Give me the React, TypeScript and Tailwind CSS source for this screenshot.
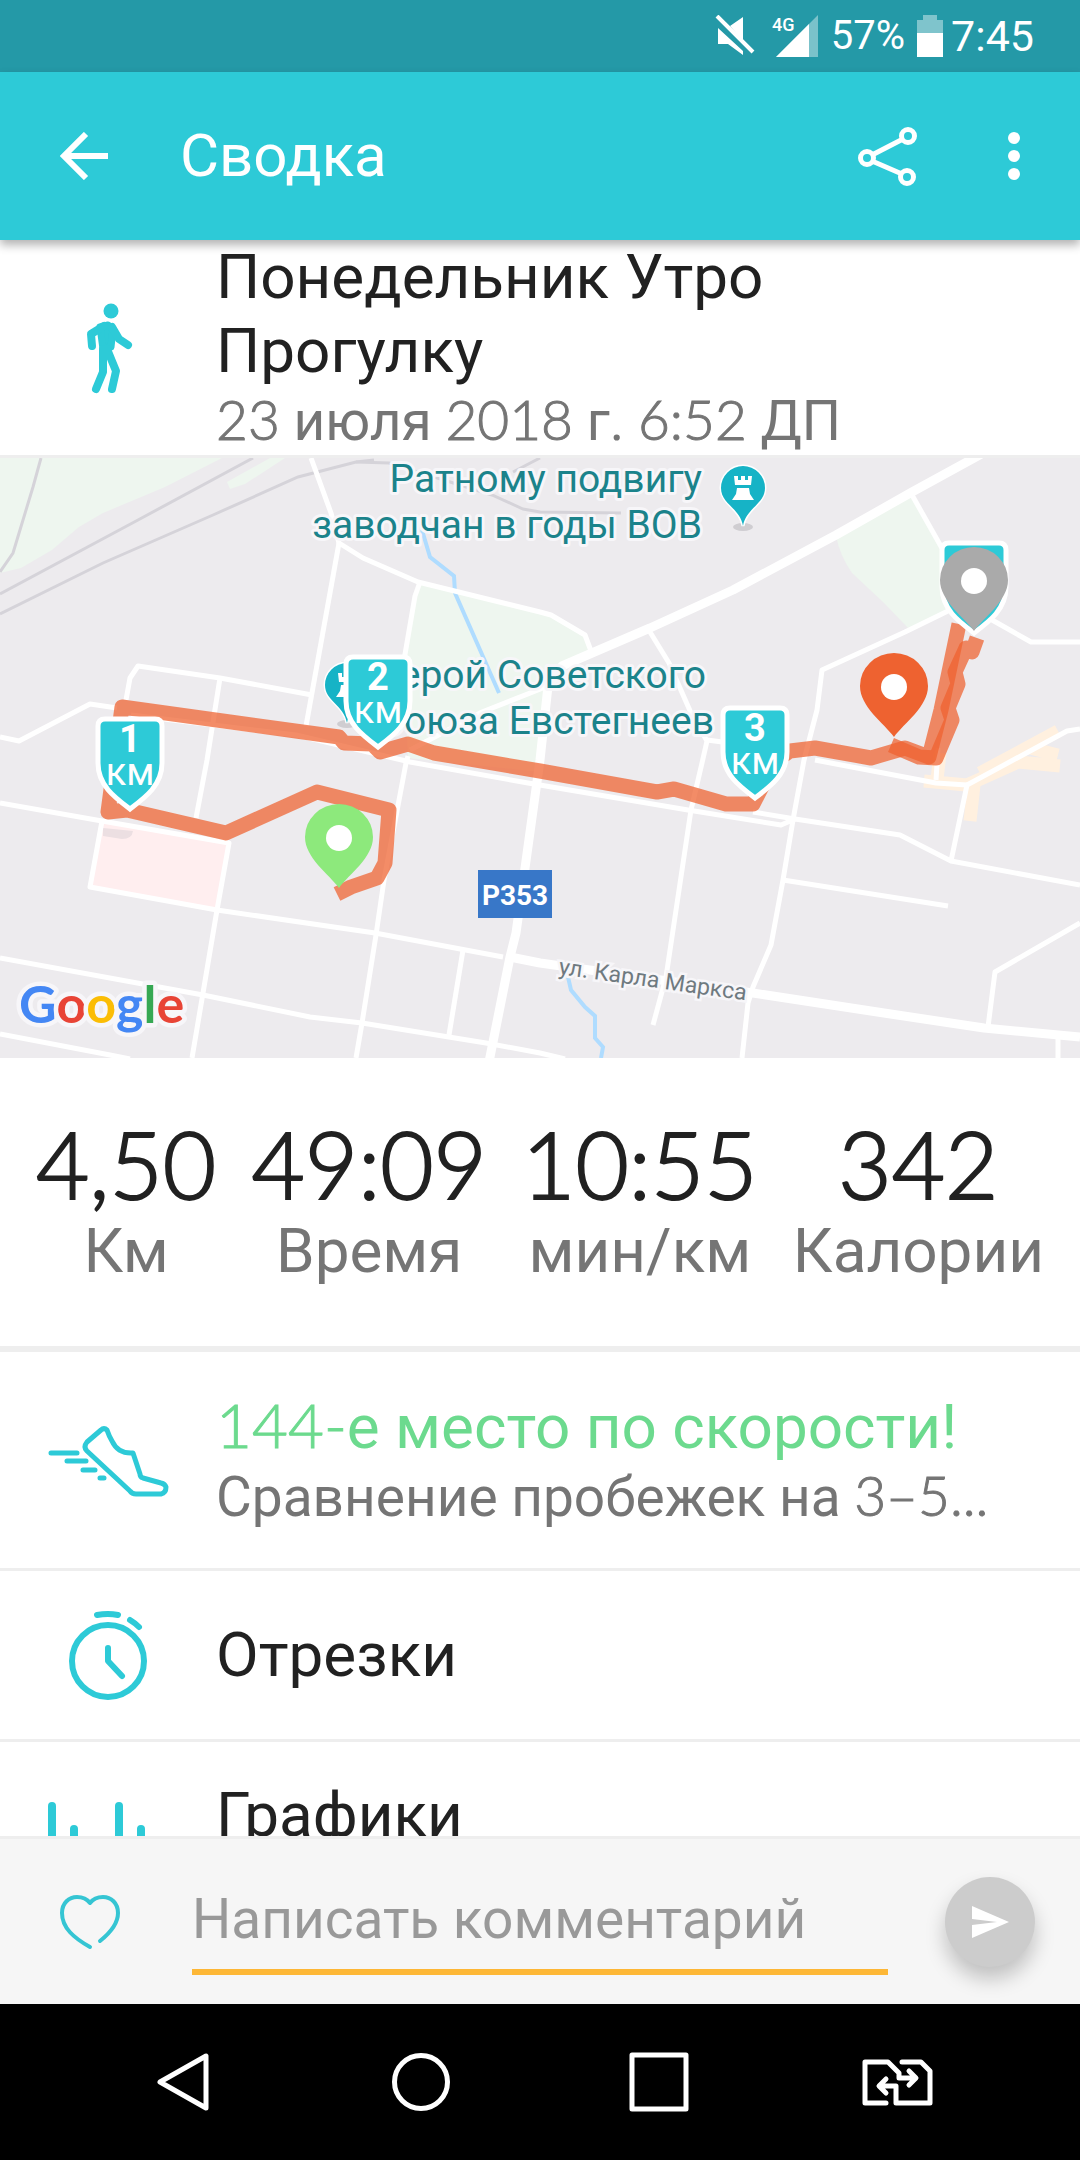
import { ReactNode } from "react";

const stats = [
	{ value: "4,50", label: "Км" },
	{ value: "49:09", label: "Время" },
	{ value: "10:55", label: "мин/км" },
	{ value: "342", label: "Калории" },
];

const minorRoads = [
	"M311 0L331 55L339 85L363 100L418 124L540 154L551 157L585 177L591 193",
	"M339 85L306 268",
	"M420 124L415 138L403 208",
	"M548 228L482 254L410 292",
	"M650 174L669 205L691 255L707 283L702 305L691 352L666 519L653 567",
	"M707 282L730 285",
	"M912 37L943 92V120",
	"M950 152L905 174L822 212L817 252L804 302L793 362L783 422L771 487L753 529L748 545L742 600",
	"M985 158L1031 184H1080",
	"M1080 271L1067 273L967 327L951 403",
	"M815 302L936 325L967 327",
	"M938 290L936 322",
	"M131 257L296 277L410 304L528 325L688 352L781 367L795 361",
	"M753 354L795 361L900 377L951 403L1080 427",
	"M783 422L948 448",
	"M1080 465L995 514L988 569",
	"M1058 580V600",
	"M0 345L102 363L229 385L217 452L203 535L192 600",
	"M102 363L90 429L217 452L375 475L503 499",
	"M0 500L203 537L310 559L362 565L486 585L540 595L565 601",
	"M0 576L110 597L130 601",
	"M220 220L207 302L196 360",
	"M408 298L406 305L384 422L376 477L362 565L356 600",
	"M463 492L449 577",
	"M126 242L130 220L138 208L220 220L312 237",
	"M0 279L19 283L90 246L117 250",
];

const mainRoads = [
	"M985 -6L912 34L836 77L733 132L650 170L592 195L562 208L548 228L540 302L516 475L510 499L489 604",
	"M510 499L540 505L753 535L884 555L984 570L1080 579",
];

const railways = [
	"M41 0L33 29L13 95L0 114",
	"M253 0L138 62L0 136",
	"M374 2L356 4L298 19L213 57L103 105L0 156",
	"M356 4L389 5L492 37L523 51L540 54L621 55",
	"M513 14L540 0",
];

// Digits are set in a lighter face than the Cyrillic text next to them
const Digits = ({ children }: { children: ReactNode }) => (
	<span className="font-['Lato',sans-serif] leading-none font-light [-webkit-text-stroke:1px]">{children}</span>
);

const StatusBar = () => (
	<div className="flex h-[72px] shrink-0 items-center justify-end bg-[#2499a7] pr-[46px] text-white">
		<svg className="h-[42px] w-[42px]" viewBox="0 0 42 42" fill="#fff">
			<path d="M17 11L30 2V26ZM5 13L30 36V40L15 29H5Z" />
			<path d="M4 1L40 37" stroke="#fff" strokeWidth="4" />
		</svg>
		<svg className="ml-4 h-[42px] w-[48px] overflow-visible" viewBox="0 0 48 42" fill="#fff">
			<path d="M5 42L47 0V42Z" opacity=".4" />
			<path d="M5 42L38 9V42Z" />
			<text x="1" y="16" className="font-['Roboto',sans-serif] text-[18px] font-medium">4G</text>
		</svg>
		<span className="ml-3 text-[40px] leading-[48px]">57%</span>
		<svg className="ml-3 h-[42px] w-[26px]" viewBox="0 0 26 42" fill="#fff">
			<path d="M6 0H20V5H26V18H0V5H6Z" opacity=".42" />
			<path d="M0 18H26V42H0Z" />
		</svg>
		<span className="ml-2 text-[43px] leading-[50px]">7:45</span>
	</div>
);

const Header = () => (
	<header className="relative z-10 flex h-[168px] shrink-0 items-center bg-[#2dcad7] text-white shadow-[0_5px_9px_rgba(0,0,0,0.3)]">
		<button aria-label="Назад" className="ml-[60px]">
			<svg className="size-12" viewBox="0 0 48 48" fill="none" stroke="#fff" strokeWidth="6">
				<path d="M26 2L4 24L26 46M4 24H48" />
			</svg>
		</button>
		<h1 className="ml-[72px] flex-1 text-[60px] leading-[74px]">Сводка</h1>
		<button aria-label="Поделиться" className="mr-[90px]">
			<svg className="h-[60px] w-[62px]" viewBox="-1 -1 62 60" fill="none" stroke="#fff" strokeWidth="5">
				<circle cx="10" cy="31" r="6.5" />
				<circle cx="51" cy="9" r="6.5" />
				<circle cx="50" cy="50" r="6.5" />
				<path d="M15 28L46 12M15 34L45 47" />
			</svg>
		</button>
		<button aria-label="Ещё" className="mr-[60px]">
			<svg className="h-12 w-3" viewBox="0 0 12 48" fill="#fff">
				<circle cx="6" cy="6" r="6" />
				<circle cx="6" cy="24" r="6" />
				<circle cx="6" cy="42" r="6" />
			</svg>
		</button>
	</header>
);

const Shield = ({ x, y, km }: { x: number; y: number; km?: string }) => (
	<g transform={`translate(${x} ${y})`} fill="#fff" textAnchor="middle">
		<path
			d="M-25 -90H25Q32 -90 32 -83V-46C32 -24 16 -12 0 0C-16 -12 -32 -24 -32 -46V-83Q-32 -90 -25 -90Z"
			fill="#2dcad7"
			stroke="#fff"
			strokeWidth="5"
		/>
		{km && (
			<>
				<text y="-57" className="text-[38px] font-bold">{km}</text>
				<text y="-24" className="text-[38px]">км</text>
			</>
		)}
	</g>
);

const Pin = ({ x, y, color }: { x: number; y: number; color: string }) => (
	<g transform={`translate(${x} ${y})`}>
		<path d="M0 0C-10 -14 -34 -30 -34 -51A34 33 0 0 1 34 -51C34 -30 10 -14 0 0Z" fill={color} />
		<circle cy="-50" r="13" fill="#fff" />
	</g>
);

const Landmark = ({ x, y }: { x: number; y: number }) => (
	<g transform={`translate(${x} ${y})`}>
		<ellipse cy="1" rx="10" ry="4" fill="#cfcdd1" />
		<path
			d="M0 0C-3 -18 -22 -22 -22 -38A22 22 0 0 1 22 -38C22 -22 3 -18 0 0Z"
			fill="#16b3c6"
			stroke="#fff"
			strokeWidth="3"
			paintOrder="stroke"
		/>
		<path d="M-9 -50H-5V-46H-2V-50H2V-46H5V-50H9L8 -41H-8ZM-6 -38H6L7 -32L11 -26H-11L-7 -32Z" fill="#fff" />
	</g>
);

const RouteMap = () => (
	<svg
		className="block h-[603px] w-full border-t-3 border-[#eee] bg-[#edebee] font-['Roboto',sans-serif]"
		viewBox="0 0 1080 600"
		preserveAspectRatio="xMidYMid slice"
		role="img"
		aria-label="Карта маршрута"
	>
		<g fill="#eef6ef">
			<path d="M0 0H222L165 29L103 55L79 69L52 92L21 110L0 115Z" />
			<path d="M227 24L270 0H285L245 26L230 31Z" />
			<path d="M420 125L551 157L585 177L591 193L565 206L548 240L540 314L408 300L403 205Z" />
			<path d="M912 37L836 78Q840 98 852 115L884 145L908 170L948 152L943 92Z" />
		</g>
		<path d="M102 363L229 385L217 452L90 429Z" fill="#ffeeef" />
		<path d="M103 370L133 373Q132 381 122 381L103 378Z" fill="#ecdfe2" />
		<g fill="none" stroke="#d5d3d9" strokeWidth="3">
			{railways.map((d) => (
				<path key={d} d={d} />
			))}
		</g>
		<g fill="none" stroke="#fff0df" strokeWidth="13">
			<path d="M924 323L967 327L1018 304L1060 308M974 327L970 363M940 295L937 322M980 315L1058 273M1030 290L1058 297" />
		</g>
		<g fill="none" stroke="#afdcff" strokeWidth="4">
			<path d="M422 72L430 99L454 118L455 135L499 235" />
			<path d="M568 519L571 532L585 549L595 558V580L603 589L601 600" />
		</g>
		<g fill="none" stroke="#fff" strokeLinejoin="round">
			<g strokeWidth="5">
				{minorRoads.map((d) => (
					<path key={d} d={d} />
				))}
			</g>
			<g strokeWidth="9">
				{mainRoads.map((d) => (
					<path key={d} d={d} />
				))}
			</g>
		</g>

		<Landmark x={743} y={68} />
		<Landmark x={347} y={265} />
		<g
			className="text-[39px]"
			fill="#1b838b"
			stroke="#f7f6f9"
			strokeWidth="6"
			strokeLinejoin="round"
			paintOrder="stroke"
			textAnchor="end"
		>
			<text x="702" y="34">Ратному подвигу</text>
			<text x="702" y="80">заводчан в годы ВОВ</text>
			<text x="706" y="230">Герой Советского</text>
			<text x="714" y="276">Союза Евстегнеев</text>
		</g>
		<rect x="478" y="412" width="74" height="48" fill="#3877c8" />
		<text x="515" y="447" textAnchor="middle" fill="#fff" className="text-[28px] font-bold">Р353</text>
		<text
			x="558"
			y="516"
			transform="rotate(8 558 516)"
			fill="#6f7a80"
			stroke="#f7f6f9"
			strokeWidth="5"
			paintOrder="stroke"
			className="text-[23px]"
		>
			ул. Карла Маркса
		</text>

		<g fill="none" stroke="#ef612f" strokeWidth="15" strokeLinejoin="round" strokeOpacity=".73">
			<path d="M337 436L351 429L377 420L385 405L389 352L317 334L226 375L127 352L108 354L122 249L339 279L344 285L372 286L380 294L408 286L434 295L540 313L657 334L674 331L726 346L753 346L775 303L790 293L815 290L871 300L905 290L929 299L941 252L959 166" />
			<path d="M977 180L972 194L966 190L955 214L958 226L948 250L952 262L936 300L919 299L891 287" />
		</g>

		<Shield x={130} y={351} km="1" />
		<Shield x={378} y={289} km="2" />
		<Shield x={755} y={340} km="3" />
		<Shield x={974} y={175} />
		<Pin x={339} y={430} color="#8de97c" />
		<Pin x={894} y={279} color="#ee6230" />
		<Pin x={974} y={173} color="#aaa" />

		<text
			x="19"
			y="565"
			stroke="#f7f6f9"
			strokeWidth="9"
			strokeLinejoin="round"
			paintOrder="stroke"
			className="font-['Lato',sans-serif] text-[52px] font-bold"
		>
			<tspan fill="#4487f4">G</tspan>
			<tspan fill="#e84436">o</tspan>
			<tspan fill="#fbbd05">o</tspan>
			<tspan fill="#4487f4">g</tspan>
			<tspan fill="#36a853">l</tspan>
			<tspan fill="#e84436">e</tspan>
		</text>
	</svg>
);

const WalkIcon = () => (
	<svg className="h-24 w-[60px]" viewBox="78 299 60 96" fill="none" stroke="#2dcad7" strokeLinecap="round" strokeLinejoin="round">
		<circle cx="111" cy="310" r="7.5" fill="#2dcad7" stroke="none" />
		<path d="M100 326L108 324L113 328L111 346L103 348Z" fill="#2dcad7" strokeWidth="7" />
		<path d="M104 325L91 333L92 345M112 326L119 338L128 344M103 348V371L96 388M107 348L116 370L112 388" strokeWidth="8" />
	</svg>
);

const ShoeIcon = () => (
	<svg className="h-36 w-[126px]" viewBox="48 1388 126 144" fill="none" stroke="#2dcad7" strokeWidth="5" strokeLinecap="round" strokeLinejoin="round">
		<path d="M101 1430L87 1442Q83 1447 87 1451L130 1491Q132 1494 136 1494H161Q166 1493 166 1487Q165 1484 161 1483L143 1478Q140 1477 140 1474L133 1453Q118 1454 112 1441Q109 1436 107 1430Q104 1427 101 1430Z" />
		<path d="M51 1453H77M67 1461H86M83 1470H95M100 1478H104" />
	</svg>
);

const StopwatchIcon = () => (
	<svg className="h-24 w-[84px]" viewBox="66 1607 84 96" fill="none" stroke="#2dcad7" strokeWidth="6" strokeLinecap="round" strokeLinejoin="round">
		<circle cx="108" cy="1661" r="36" />
		<path d="M97 1615Q108 1613 118 1615M130 1620Q135 1623 139 1627M108 1648V1661L122 1676" />
	</svg>
);

const ChartIcon = () => (
	<svg className="h-[74px] w-[120px]" viewBox="48 1778 120 74" fill="none" stroke="#2dcad7" strokeWidth="8" strokeLinecap="round">
		<path d="M52 1806V1852M74 1829V1852M119 1806V1852M141 1829V1852" />
	</svg>
);

const Row = ({ icon, iconStart, children }: { icon: ReactNode; iconStart?: boolean; children: ReactNode }) => (
	<button className="flex w-full items-center border-b-3 border-[#eee] py-9 text-left">
		<span className={iconStart ? "flex w-[216px] shrink-0 pl-12" : "flex w-[216px] shrink-0 justify-center"}>{icon}</span>
		<span className="min-w-0 flex-1 pr-6 text-[62px] leading-[74px] text-[#212121]">{children}</span>
	</button>
);

const CommentBar = () => (
	<form className="flex h-[168px] shrink-0 items-center border-t-3 border-[#eee] bg-[#f6f6f6]" onSubmit={(e) => e.preventDefault()}>
		<button type="button" aria-label="Нравится" className="ml-[57px]">
			<svg className="h-[60px] w-[66px]" viewBox="57 1892 66 60" fill="none" stroke="#35c5d3" strokeWidth="4" strokeLinecap="round" strokeLinejoin="round">
				<path d="M100 1941C110 1933 118 1924 118 1913C118 1903 111 1897 103 1897C97 1897 93 1899 90 1903C87 1899 83 1897 77 1897C69 1897 62 1903 62 1913C62 1928 74 1938 90 1947" />
			</svg>
		</button>
		<input
			type="text"
			aria-label="Комментарий"
			placeholder="Написать комментарий"
			className="ml-[69px] h-[106px] min-w-0 flex-1 border-b-6 border-[#fdb736] bg-transparent text-[55px] outline-none placeholder:text-[#999]"
		/>
		<button
			type="submit"
			aria-label="Отправить"
			className="mr-[45px] ml-[57px] flex size-[90px] items-center justify-center rounded-full bg-[#ccc] shadow-[0_12px_20px_rgba(0,0,0,0.22)]"
		>
			<svg className="h-8 w-[37px]" viewBox="0 0 37 32" fill="#fff">
				<path d="M0 0L37 16L0 32V19L25 16L0 13Z" />
			</svg>
		</button>
	</form>
);

const NavBar = () => (
	<nav className="grid h-[156px] shrink-0 grid-cols-4 items-center bg-black px-16">
		<button aria-label="Назад" className="flex justify-center">
			<svg className="size-[60px]" viewBox="0 0 60 60" fill="none" stroke="#fff" strokeWidth="5" strokeLinejoin="round">
				<path d="M7 30L53 4V56Z" />
			</svg>
		</button>
		<button aria-label="Домой" className="flex justify-center">
			<svg className="size-[60px]" viewBox="0 0 60 60" fill="none" stroke="#fff" strokeWidth="5">
				<circle cx="30" cy="30" r="26.5" />
			</svg>
		</button>
		<button aria-label="Обзор" className="flex justify-center">
			<svg className="size-[60px]" viewBox="0 0 60 60" fill="none" stroke="#fff" strokeWidth="5" strokeLinejoin="round">
				<path d="M3 3H57V57H3Z" />
			</svg>
		</button>
		<button aria-label="Сменить SIM-карту" className="flex justify-center">
			<svg className="h-[48px] w-[72px]" viewBox="0 0 72 48" fill="none" stroke="#fff" strokeWidth="5" strokeLinecap="round" strokeLinejoin="round">
				<path d="M25 45H4V4H27L38 15V20H54M48 13L55 20L48 27" />
				<path d="M41 4H60L69 13V45H35V28H19M25 21L18 28L25 35" />
			</svg>
		</button>
	</nav>
);

export default function App() {
	return (
		<div className="flex h-screen flex-col overflow-hidden bg-white font-['Roboto',sans-serif]">
			<StatusBar />
			<Header />
			<main className="min-h-0 flex-1 overflow-hidden">
				<section className="flex items-center">
					<div className="flex w-[216px] shrink-0 justify-center">
						<WalkIcon />
					</div>
					<div className="max-w-[720px] flex-1">
						<h2 className="text-[62px] leading-[74px] text-[#212121]">Понедельник Утро Прогулку</h2>
						<p className="text-[55px] leading-[67px] text-[#757575]">
							<Digits>23</Digits> июля <Digits>2018</Digits> г. <Digits>6:52</Digits> ДП
						</p>
					</div>
				</section>
				<RouteMap />
				<section className="flex justify-between border-b-6 border-[#eee] px-9 pt-[54px] pb-[60px] text-center">
					{stats.map((stat) => (
						<div key={stat.label}>
							<p className="font-['Lato',sans-serif] text-[92px] leading-[104px] font-light text-[#212121] [-webkit-text-stroke:2px]">
								{stat.value}
							</p>
							<p className="text-[62px] leading-[70px] text-[#757575]">{stat.label}</p>
						</div>
					))}
				</section>
				<Row icon={<ShoeIcon />} iconStart>
					<span className="block text-[#6cda8e]">
						<Digits>144-</Digits>е место по скорости!
					</span>
					<span className="block truncate text-[55px] leading-[67px] text-[#757575]">
						Сравнение пробежек на <Digits>3–5...</Digits>
					</span>
				</Row>
				<Row icon={<StopwatchIcon />}>Отрезки</Row>
				<Row icon={<ChartIcon />} iconStart>Графики</Row>
			</main>
			<CommentBar />
			<NavBar />
		</div>
	);
}
